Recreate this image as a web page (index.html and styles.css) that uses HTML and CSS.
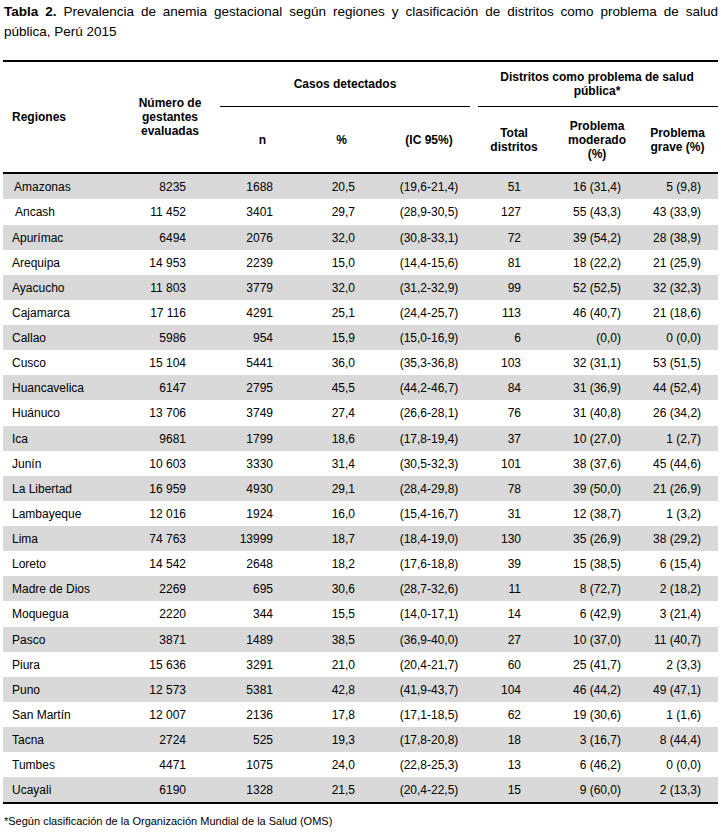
FILE: index.html
```html
<!DOCTYPE html>
<html lang="es">
<head>
<meta charset="utf-8">
<title>Tabla 2</title>
<link rel="stylesheet" href="styles.css">
</head>
<body>
<div class="page">
  <p class="title"><b>Tabla 2.</b> Prevalencia de anemia gestacional según regiones y clasificación de distritos como problema de salud pública, Perú 2015</p>
  <table class="data">
    <colgroup>
      <col class="w1"><col class="w2"><col class="w3"><col class="w4"><col class="w5"><col class="w6"><col class="w7"><col class="w8">
    </colgroup>
    <thead>
      <tr class="h1">
        <th rowspan="2" class="c1 span">Regiones</th>
        <th rowspan="2" class="c2 span">Número de<br>gestantes<br>evaluadas</th>
        <th colspan="3" class="grp-cell"><div class="grp grp-casos">Casos detectados</div></th>
        <th colspan="3" class="grp-cell"><div class="grp grp-dist">Distritos como problema de salud<br>pública*</div></th>
      </tr>
      <tr class="h2">
        <th class="c3">n</th>
        <th class="c4">%</th>
        <th class="c5">(IC 95%)</th>
        <th class="c6">Total<br>distritos</th>
        <th class="c7">Problema<br>moderado<br>(%)</th>
        <th class="c8">Problema<br>grave (%)</th>
      </tr>
    </thead>
    <tbody>
      <tr class="alt"><td class="c1 ind2">Amazonas</td><td class="c2">8235</td><td class="c3">1688</td><td class="c4">20,5</td><td class="c5">(19,6-21,4)</td><td class="c6">51</td><td class="c7">16 (31,4)</td><td class="c8">5 (9,8)</td></tr>
      <tr><td class="c1 ind3">Ancash</td><td class="c2">11 452</td><td class="c3">3401</td><td class="c4">29,7</td><td class="c5">(28,9-30,5)</td><td class="c6">127</td><td class="c7">55 (43,3)</td><td class="c8">43 (33,9)</td></tr>
      <tr class="alt"><td class="c1">Apurímac</td><td class="c2">6494</td><td class="c3">2076</td><td class="c4">32,0</td><td class="c5">(30,8-33,1)</td><td class="c6">72</td><td class="c7">39 (54,2)</td><td class="c8">28 (38,9)</td></tr>
      <tr><td class="c1">Arequipa</td><td class="c2">14 953</td><td class="c3">2239</td><td class="c4">15,0</td><td class="c5">(14,4-15,6)</td><td class="c6">81</td><td class="c7">18 (22,2)</td><td class="c8">21 (25,9)</td></tr>
      <tr class="alt"><td class="c1">Ayacucho</td><td class="c2">11 803</td><td class="c3">3779</td><td class="c4">32,0</td><td class="c5">(31,2-32,9)</td><td class="c6">99</td><td class="c7">52 (52,5)</td><td class="c8">32 (32,3)</td></tr>
      <tr><td class="c1">Cajamarca</td><td class="c2">17 116</td><td class="c3">4291</td><td class="c4">25,1</td><td class="c5">(24,4-25,7)</td><td class="c6">113</td><td class="c7">46 (40,7)</td><td class="c8">21 (18,6)</td></tr>
      <tr class="alt"><td class="c1">Callao</td><td class="c2">5986</td><td class="c3">954</td><td class="c4">15,9</td><td class="c5">(15,0-16,9)</td><td class="c6">6</td><td class="c7">(0,0)</td><td class="c8">0 (0,0)</td></tr>
      <tr><td class="c1">Cusco</td><td class="c2">15 104</td><td class="c3">5441</td><td class="c4">36,0</td><td class="c5">(35,3-36,8)</td><td class="c6">103</td><td class="c7">32 (31,1)</td><td class="c8">53 (51,5)</td></tr>
      <tr class="alt"><td class="c1">Huancavelica</td><td class="c2">6147</td><td class="c3">2795</td><td class="c4">45,5</td><td class="c5">(44,2-46,7)</td><td class="c6">84</td><td class="c7">31 (36,9)</td><td class="c8">44 (52,4)</td></tr>
      <tr><td class="c1">Huánuco</td><td class="c2">13 706</td><td class="c3">3749</td><td class="c4">27,4</td><td class="c5">(26,6-28,1)</td><td class="c6">76</td><td class="c7">31 (40,8)</td><td class="c8">26 (34,2)</td></tr>
      <tr class="alt"><td class="c1">Ica</td><td class="c2">9681</td><td class="c3">1799</td><td class="c4">18,6</td><td class="c5">(17,8-19,4)</td><td class="c6">37</td><td class="c7">10 (27,0)</td><td class="c8">1 (2,7)</td></tr>
      <tr><td class="c1">Junín</td><td class="c2">10 603</td><td class="c3">3330</td><td class="c4">31,4</td><td class="c5">(30,5-32,3)</td><td class="c6">101</td><td class="c7">38 (37,6)</td><td class="c8">45 (44,6)</td></tr>
      <tr class="alt"><td class="c1">La Libertad</td><td class="c2">16 959</td><td class="c3">4930</td><td class="c4">29,1</td><td class="c5">(28,4-29,8)</td><td class="c6">78</td><td class="c7">39 (50,0)</td><td class="c8">21 (26,9)</td></tr>
      <tr><td class="c1">Lambayeque</td><td class="c2">12 016</td><td class="c3">1924</td><td class="c4">16,0</td><td class="c5">(15,4-16,7)</td><td class="c6">31</td><td class="c7">12 (38,7)</td><td class="c8">1 (3,2)</td></tr>
      <tr class="alt"><td class="c1">Lima</td><td class="c2">74 763</td><td class="c3">13999</td><td class="c4">18,7</td><td class="c5">(18,4-19,0)</td><td class="c6">130</td><td class="c7">35 (26,9)</td><td class="c8">38 (29,2)</td></tr>
      <tr><td class="c1">Loreto</td><td class="c2">14 542</td><td class="c3">2648</td><td class="c4">18,2</td><td class="c5">(17,6-18,8)</td><td class="c6">39</td><td class="c7">15 (38,5)</td><td class="c8">6 (15,4)</td></tr>
      <tr class="alt"><td class="c1">Madre de Dios</td><td class="c2">2269</td><td class="c3">695</td><td class="c4">30,6</td><td class="c5">(28,7-32,6)</td><td class="c6">11</td><td class="c7">8 (72,7)</td><td class="c8">2 (18,2)</td></tr>
      <tr><td class="c1">Moquegua</td><td class="c2">2220</td><td class="c3">344</td><td class="c4">15,5</td><td class="c5">(14,0-17,1)</td><td class="c6">14</td><td class="c7">6 (42,9)</td><td class="c8">3 (21,4)</td></tr>
      <tr class="alt"><td class="c1">Pasco</td><td class="c2">3871</td><td class="c3">1489</td><td class="c4">38,5</td><td class="c5">(36,9-40,0)</td><td class="c6">27</td><td class="c7">10 (37,0)</td><td class="c8">11 (40,7)</td></tr>
      <tr><td class="c1">Piura</td><td class="c2">15 636</td><td class="c3">3291</td><td class="c4">21,0</td><td class="c5">(20,4-21,7)</td><td class="c6">60</td><td class="c7">25 (41,7)</td><td class="c8">2 (3,3)</td></tr>
      <tr class="alt"><td class="c1">Puno</td><td class="c2">12 573</td><td class="c3">5381</td><td class="c4">42,8</td><td class="c5">(41,9-43,7)</td><td class="c6">104</td><td class="c7">46 (44,2)</td><td class="c8">49 (47,1)</td></tr>
      <tr><td class="c1">San Martín</td><td class="c2">12 007</td><td class="c3">2136</td><td class="c4">17,8</td><td class="c5">(17,1-18,5)</td><td class="c6">62</td><td class="c7">19 (30,6)</td><td class="c8">1 (1,6)</td></tr>
      <tr class="alt"><td class="c1">Tacna</td><td class="c2">2724</td><td class="c3">525</td><td class="c4">19,3</td><td class="c5">(17,8-20,8)</td><td class="c6">18</td><td class="c7">3 (16,7)</td><td class="c8">8 (44,4)</td></tr>
      <tr><td class="c1">Tumbes</td><td class="c2">4471</td><td class="c3">1075</td><td class="c4">24,0</td><td class="c5">(22,8-25,3)</td><td class="c6">13</td><td class="c7">6 (46,2)</td><td class="c8">0 (0,0)</td></tr>
      <tr class="alt last"><td class="c1">Ucayali</td><td class="c2">6190</td><td class="c3">1328</td><td class="c4">21,5</td><td class="c5">(20,4-22,5)</td><td class="c6">15</td><td class="c7">9 (60,0)</td><td class="c8">2 (13,3)</td></tr>
    </tbody>
  </table>
  <p class="note">*Según clasificación de la Organización Mundial de la Salud (OMS)</p>
</div>
</body>
</html>
```

FILE: styles.css
```css
* { box-sizing: border-box; }

body {
  margin: 0;
  background: #fff;
  color: #000;
  font-family: "Liberation Sans", Arial, sans-serif;
}

.page {
  width: 721px;
  padding: 2px 3px 0 4px;
}

.title {
  margin: 0;
  font-size: 13.5px;
  line-height: 20px;
  text-align: justify;
}

.data {
  margin-top: 18px;
  margin-left: -1px;
  width: 715px;
  table-layout: fixed;
  border-collapse: separate;
  border-spacing: 0;
  font-size: 12px;
}

.w1 { width: 127px; }
.w2 { width: 80px; }
.w3 { width: 90px; }
.w4 { width: 70px; }
.w5 { width: 104px; }
.w6 { width: 76px; }
.w7 { width: 85px; }
.w8 { width: 83px; }

th {
  font-weight: bold;
  line-height: 14px;
  padding: 0;
  vertical-align: middle;
}

.h1 th { border-top: 2px solid #000; }
.h1 .span, .h2 th { border-bottom: 2px solid #000; }

.h1 .c1 { text-align: left; padding-left: 9px; }
.h1 .c2 { text-align: center; }

.grp {
  height: 45px;
  border-bottom: 1px solid #000;
  display: flex;
  align-items: center;
  justify-content: center;
  text-align: center;
}
.grp-casos { margin: 0 4px 0 10px; }
.grp-dist { margin: 0 0 0 4px; padding-right: 2px; }

.h2 th { height: 67px; }
.h2 .c3 { text-align: right; padding-right: 34px; }
.h2 .c4 { text-align: right; padding-right: 23px; }
.h2 .c5 { text-align: center; padding-left: 14px; }
.h2 .c6 { text-align: center; padding-left: 4px; }
.h2 .c7 { text-align: center; padding-left: 9px; }
.h2 .c8 { text-align: center; padding-left: 2px; }

tbody tr { height: 25px; }
tbody tr:nth-child(8n+2) { height: 26px; }
tbody tr.last { height: 27px; }
tbody td {
  padding: 0;
  line-height: 14px;
  vertical-align: middle;
  white-space: nowrap;
  text-align: right;
}
tbody tr.alt td { background: #d9d9d9; }
tbody tr.last td { border-bottom: 2px solid #000; }

tbody .c1 { text-align: left; padding-left: 9px; }
tbody .c1.ind2 { padding-left: 11px; }
tbody .c1.ind3 { padding-left: 12px; }
tbody .c2 { padding-right: 24px; }
tbody .c3 { padding-right: 27px; }
tbody .c4 { padding-right: 15px; }
tbody .c5 { text-align: center; padding-left: 14px; }
tbody .c6 { padding-right: 29px; }
tbody .c7 { padding-right: 14px; }
tbody .c8 { padding-right: 17px; }

.note {
  margin: 10px 0 0 0;
  font-size: 11px;
  line-height: 14px;
}
```
